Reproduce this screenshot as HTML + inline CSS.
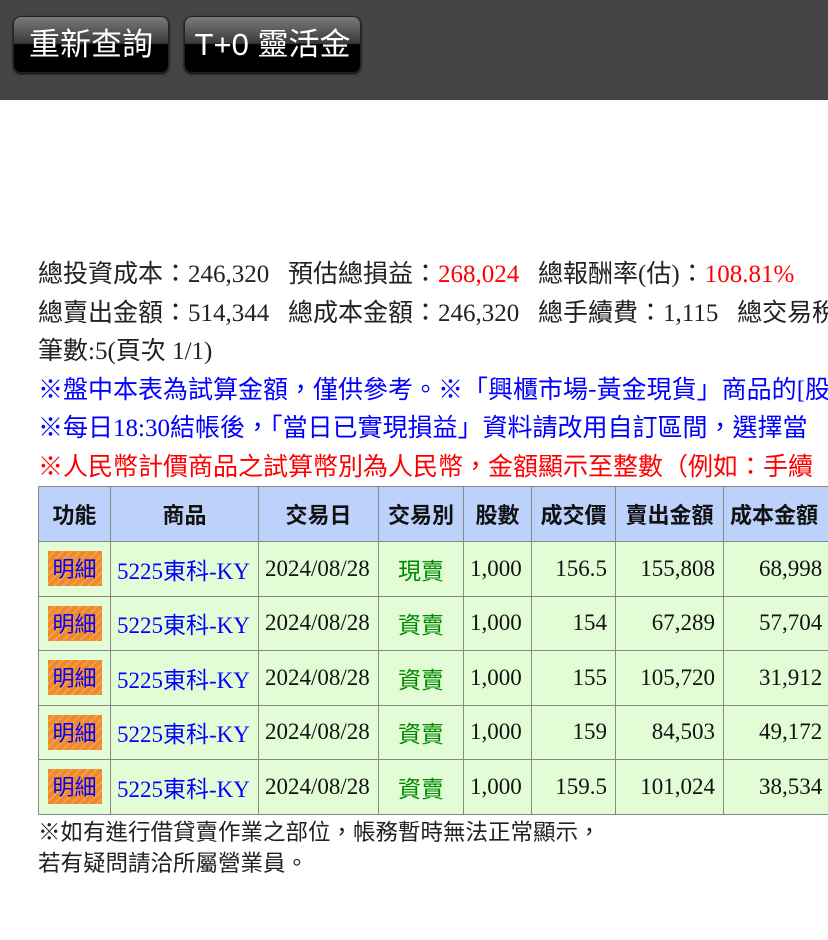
<!DOCTYPE html>
<html><head><meta charset="utf-8"><style>
*{margin:0;padding:0;box-sizing:border-box}
body{width:828px;height:940px;overflow:hidden;background:#fff;font-family:"Liberation Serif","Noto Sans CJK TC",serif;position:relative}
.top{position:absolute;left:0;top:0;width:828px;height:100px;background:#444}
.btn{position:absolute;top:16px;height:57px;border-radius:8px;border:1px solid #222;background:linear-gradient(#7a7a7a 0%,#3a3a3a 48%,#000 50%,#000 100%);color:#fff;font-family:"Liberation Sans","Noto Sans CJK TC",sans-serif;font-size:31px;line-height:55px;text-align:center;box-shadow:0 1px 2px #000}
.info{position:absolute;left:38px;top:253px;white-space:nowrap;font-size:25px;color:#222}
.info div{height:38.6px;line-height:38.6px;overflow:visible}
.info .cjk{font-family:"Noto Sans CJK TC",sans-serif;line-height:38.6px}
.r{color:#f00}.b{color:#00f}
table{position:absolute;left:38px;top:486px;border-collapse:collapse;font-size:23px;white-space:nowrap;table-layout:fixed;width:805px}
td,th{border:1px solid #888;height:54.5px;padding:0 8px;overflow:hidden}
th{background:#bcd2fb;font-family:"Noto Sans CJK TC",sans-serif;font-weight:bold;font-size:22px;height:55px;color:#111;padding:0 2px}
td{background:#e2fdd5;color:#111}
.num{text-align:right}
.c{text-align:center}
.lk{color:#00f;padding:0 6px}
.g{color:#080;font-family:"Noto Sans CJK TC",sans-serif}
.bd{display:inline-block;background:repeating-linear-gradient(135deg,#ee8a2a 0 4px,#f4a050 4px 6px);color:#00f;font-family:"Noto Sans CJK TC",sans-serif;width:54px;text-align:center;line-height:35px;font-size:22px}
td.f{padding:0}
.foot{position:absolute;left:38px;top:816px;font-family:"Noto Sans CJK TC",sans-serif;font-size:22.5px;line-height:31px;color:#222}
</style></head><body>
<div class="top">
<div class="btn" style="left:13px;width:156px">重新查詢</div>
<div class="btn" style="left:184px;width:177px">T+0 靈活金</div>
</div>
<div class="info">
<div><span class="cjk">總投資成本：</span>246,320&nbsp;&nbsp; <span class="cjk">預估總損益：</span><span class="r">268,024</span>&nbsp;&nbsp; <span class="cjk">總報酬率</span>(<span class="cjk">估</span>)<span class="cjk">：</span><span class="r">108.81%</span></div>
<div><span class="cjk">總賣出金額：</span>514,344&nbsp;&nbsp; <span class="cjk">總成本金額：</span>246,320&nbsp;&nbsp; <span class="cjk">總手續費：</span>1,115&nbsp;&nbsp; <span class="cjk">總交易稅</span></div>
<div><span class="cjk">筆數</span>:5(<span class="cjk">頁次</span> 1/1)</div>
<div class="b"><span class="cjk">※盤中本表為試算金額，僅供參考。※「興櫃市場-黃金現貨」商品的</span>[<span class="cjk">股</span></div>
<div class="b"><span class="cjk">※每日</span>18:30<span class="cjk">結帳後，「當日已實現損益」資料請改用自訂區間，選擇當</span></div>
<div class="r"><span class="cjk">※人民幣計價商品之試算幣別為人民幣，金額顯示至整數（例如：手續</span></div>
</div>
<table>
<colgroup><col style="width:72px"><col style="width:148px"><col style="width:120px"><col style="width:85px"><col style="width:68px"><col style="width:84px"><col style="width:108px"><col style="width:120px"></colgroup>
<tr><th>功能</th><th>商品</th><th>交易日</th><th>交易別</th><th>股數</th><th>成交價</th><th>賣出金額</th><th style="text-align:left;padding-left:6px">成本金額</th></tr>
<tr><td class="c f"><span class="bd">明細</span></td><td class="lk">5225<span style="font-family:'Noto Sans CJK TC',sans-serif">東科</span>-KY</td><td style="padding:0 6px">2024/08/28</td><td class="c g">現賣</td><td style="padding:0 6px">1,000</td><td class="num">156.5</td><td class="num">155,808</td><td style="padding-left:35px">68,998</td></tr>
<tr><td class="c f"><span class="bd">明細</span></td><td class="lk">5225<span style="font-family:'Noto Sans CJK TC',sans-serif">東科</span>-KY</td><td style="padding:0 6px">2024/08/28</td><td class="c g">資賣</td><td style="padding:0 6px">1,000</td><td class="num">154</td><td class="num">67,289</td><td style="padding-left:35px">57,704</td></tr>
<tr><td class="c f"><span class="bd">明細</span></td><td class="lk">5225<span style="font-family:'Noto Sans CJK TC',sans-serif">東科</span>-KY</td><td style="padding:0 6px">2024/08/28</td><td class="c g">資賣</td><td style="padding:0 6px">1,000</td><td class="num">155</td><td class="num">105,720</td><td style="padding-left:35px">31,912</td></tr>
<tr><td class="c f"><span class="bd">明細</span></td><td class="lk">5225<span style="font-family:'Noto Sans CJK TC',sans-serif">東科</span>-KY</td><td style="padding:0 6px">2024/08/28</td><td class="c g">資賣</td><td style="padding:0 6px">1,000</td><td class="num">159</td><td class="num">84,503</td><td style="padding-left:35px">49,172</td></tr>
<tr><td class="c f"><span class="bd">明細</span></td><td class="lk">5225<span style="font-family:'Noto Sans CJK TC',sans-serif">東科</span>-KY</td><td style="padding:0 6px">2024/08/28</td><td class="c g">資賣</td><td style="padding:0 6px">1,000</td><td class="num">159.5</td><td class="num">101,024</td><td style="padding-left:35px">38,534</td></tr>
</table>
<div class="foot">※如有進行借貸賣作業之部位，帳務暫時無法正常顯示，<br>若有疑問請洽所屬營業員。</div>
</body></html>
